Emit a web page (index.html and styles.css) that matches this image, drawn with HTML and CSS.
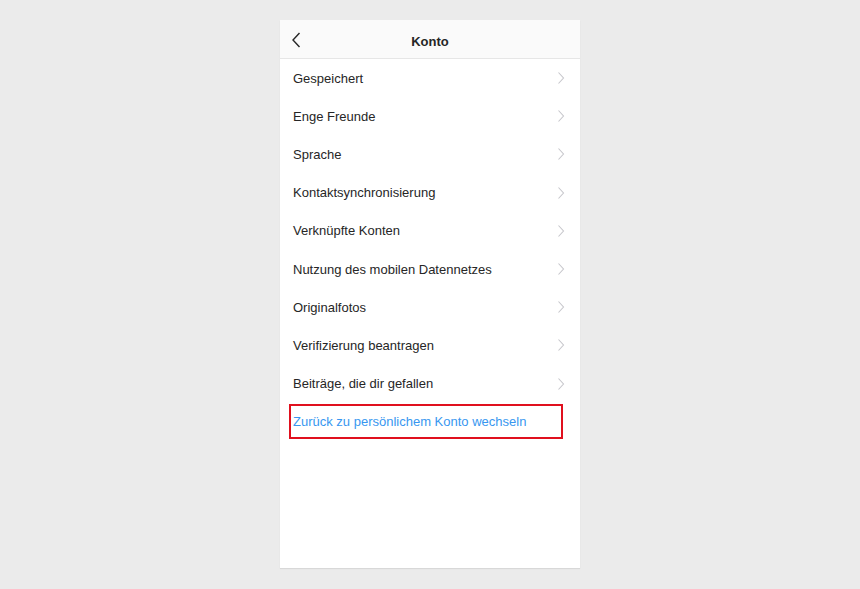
FILE: index.html
```html
<!DOCTYPE html>
<html lang="de">
<head>
<meta charset="utf-8">
<link rel="stylesheet" href="styles.css">
</head>
<body>
<div class="phone">
  <div class="header">
    <svg class="back" width="10" height="16" viewBox="0 0 10 16"><path d="M8.5 1 L2 8 L8.5 15" fill="none" stroke="#262626" stroke-width="1.4"/></svg>
    <div class="title">Konto</div>
  </div>
  <ul class="list">
    <li class="row"><span>Gespeichert</span><svg class="chev" width="8" height="14" viewBox="0 0 8 14"><path d="M1.5 1.5 L6.5 7 L1.5 12.5" fill="none" stroke="#c7c7cc" stroke-width="1.1"/></svg></li>
    <li class="row"><span>Enge Freunde</span><svg class="chev" width="8" height="14" viewBox="0 0 8 14"><path d="M1.5 1.5 L6.5 7 L1.5 12.5" fill="none" stroke="#c7c7cc" stroke-width="1.1"/></svg></li>
    <li class="row"><span>Sprache</span><svg class="chev" width="8" height="14" viewBox="0 0 8 14"><path d="M1.5 1.5 L6.5 7 L1.5 12.5" fill="none" stroke="#c7c7cc" stroke-width="1.1"/></svg></li>
    <li class="row"><span>Kontaktsynchronisierung</span><svg class="chev" width="8" height="14" viewBox="0 0 8 14"><path d="M1.5 1.5 L6.5 7 L1.5 12.5" fill="none" stroke="#c7c7cc" stroke-width="1.1"/></svg></li>
    <li class="row"><span>Verknüpfte Konten</span><svg class="chev" width="8" height="14" viewBox="0 0 8 14"><path d="M1.5 1.5 L6.5 7 L1.5 12.5" fill="none" stroke="#c7c7cc" stroke-width="1.1"/></svg></li>
    <li class="row"><span>Nutzung des mobilen Datennetzes</span><svg class="chev" width="8" height="14" viewBox="0 0 8 14"><path d="M1.5 1.5 L6.5 7 L1.5 12.5" fill="none" stroke="#c7c7cc" stroke-width="1.1"/></svg></li>
    <li class="row"><span>Originalfotos</span><svg class="chev" width="8" height="14" viewBox="0 0 8 14"><path d="M1.5 1.5 L6.5 7 L1.5 12.5" fill="none" stroke="#c7c7cc" stroke-width="1.1"/></svg></li>
    <li class="row"><span>Verifizierung beantragen</span><svg class="chev" width="8" height="14" viewBox="0 0 8 14"><path d="M1.5 1.5 L6.5 7 L1.5 12.5" fill="none" stroke="#c7c7cc" stroke-width="1.1"/></svg></li>
    <li class="row"><span>Beiträge, die dir gefallen</span><svg class="chev" width="8" height="14" viewBox="0 0 8 14"><path d="M1.5 1.5 L6.5 7 L1.5 12.5" fill="none" stroke="#c7c7cc" stroke-width="1.1"/></svg></li>
    <li class="row switch"><span class="link">Zurück zu persönlichem Konto wechseln</span></li>
  </ul>
</div>
</body>
</html>
```
FILE: styles.css
```css
html, body {
  margin: 0;
  padding: 0;
  background: #ebebeb;
  font-family: "Liberation Sans", Arial, sans-serif;
}
body {
  display: flex;
  justify-content: center;
  padding-top: 20px;
  height: 589px;
  box-sizing: border-box;
}
.phone {
  width: 300px;
  height: 548px;
  background: #fff;
  box-shadow: 0 1px 1px rgba(0,0,0,0.08);
  display: flex;
  flex-direction: column;
}
.header {
  height: 39px;
  padding-top: 4px;
  background: #fafafa;
  border-bottom: 1px solid #e6e6e6;
  box-sizing: border-box;
  display: flex;
  align-items: center;
  justify-content: center;
  position: relative;
}
.back {
  position: absolute;
  left: 11px;
  top: 12px;
}
.title {
  font-size: 13px;
  font-weight: bold;
  color: #262626;
}
.list {
  list-style: none;
  margin: 0;
  padding: 0;
}
.row {
  height: 38.2px;
  display: flex;
  align-items: center;
  justify-content: space-between;
  padding: 0 15px 0 13px;
  font-size: 13px;
  color: #262626;
}
.chev {
  display: block;
}
.switch {
  margin: 1px 17px 0 9px;
  padding: 0 0 0 2px;
  height: 35px;
  border: 2px solid #e0101e;
  box-sizing: border-box;
}
.link {
  color: #3897f0;
}
```
